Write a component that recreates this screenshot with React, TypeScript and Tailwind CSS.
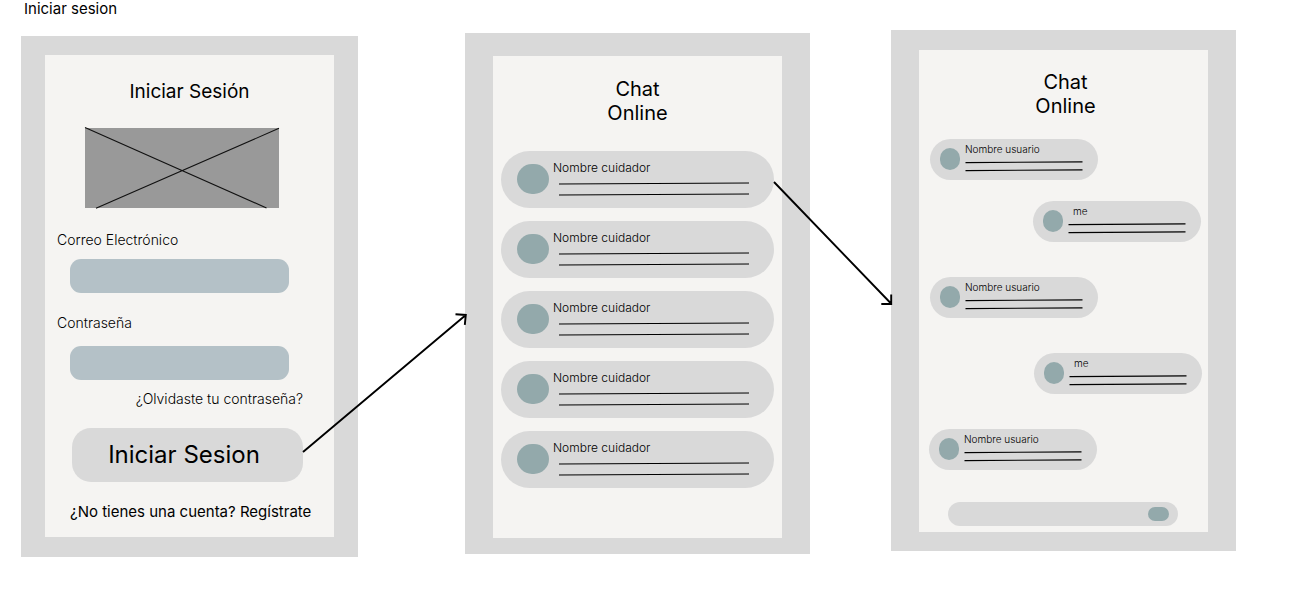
import type { ReactNode } from "react";

const caregivers = [1, 2, 3, 4, 5];

const messages = [
  { id: 1, mine: false, place: "ml-[11px]" },
  { id: 2, mine: true, place: "ml-auto mr-[7px] mt-[21px]" },
  { id: 3, mine: false, place: "ml-[11px] mt-[35px]" },
  { id: 4, mine: true, place: "ml-auto mr-1.5 mt-[35px]" },
  { id: 5, mine: false, place: "ml-2.5 mt-[35px]" },
];

function Frame({ className, children }: { className: string; children: ReactNode }) {
  return (
    <section className={`shrink-0 bg-[#d9d9d9] ${className}`}>
      <div className="min-h-[482px] w-[289px] bg-[#f5f4f2]">{children}</div>
    </section>
  );
}

function Login() {
  return (
    <Frame className="mt-1.5 px-6 pt-[19px] pb-5">
      <form className="flex flex-col pt-[25px] pb-[15px]" onSubmit={(e) => e.preventDefault()}>
        <h2 className="text-center text-[19px] leading-6">Iniciar Sesión</h2>
        <svg
          className="mt-6 ml-10 h-20 w-[194px] overflow-visible bg-[#999]"
          viewBox="0 0 194 80"
          stroke="#111"
          strokeWidth="1.1"
          aria-hidden="true"
        >
          <path d="M0 -.5 181.5 80M194 .3 11 80.3" />
        </svg>
        <label htmlFor="email" className="mt-[22px] ml-3 text-[14px] leading-5 font-light">
          Correo Electrónico
        </label>
        <input
          id="email"
          type="email"
          className="mt-[9px] ml-[25px] h-[34px] w-[219px] rounded-[11px] bg-[#b4c1c7] px-3 text-[14px] outline-none"
        />
        <label htmlFor="password" className="mt-5 ml-3 text-[14px] leading-5 font-light">
          Contraseña
        </label>
        <input
          id="password"
          type="password"
          className="mt-[13px] ml-[25px] h-[34px] w-[219px] rounded-[11px] bg-[#b4c1c7] px-3 text-[14px] outline-none"
        />
        <a href="#recuperar" className="mt-[9px] mr-[31px] self-end text-[14px] leading-5 font-light">
          ¿Olvidaste tu contraseña?
        </a>
        <div className="relative mt-[19px] mr-[31px] ml-[27px]">
          <button
            type="submit"
            className="h-[54px] w-full rounded-[19px] bg-[#d9d9d9] pr-[7px] text-[24px] leading-8"
          >
            Iniciar Sesion
          </button>
          <svg
            className="pointer-events-none absolute bottom-full left-full z-10 h-[118px] w-[164px] overflow-visible"
            viewBox="0 0 164 118"
            fill="none"
            stroke="#000"
            strokeWidth="1.9"
            aria-hidden="true"
          >
            <path d="M0 142 162.5 5.3M152.5 4.3 162.8 5 161.8 14.8" />
          </svg>
        </div>
        <a href="#registro" className="mt-5 ml-[25px] text-[15px] leading-5 whitespace-nowrap">
          ¿No tienes una cuenta? Regístrate
        </a>
      </form>
    </Frame>
  );
}

function CaregiverList() {
  return (
    <Frame className="mt-[3px] ml-[107px] px-7 pt-[23px] pb-4">
      <div className="px-2 pt-[21px]">
        <h2 className="text-center text-[20px] leading-6">
          Chat
          <br />
          Online
        </h2>
        <ul className="mt-[26px] flex flex-col gap-[13px]">
          {caregivers.map((id) => (
            <li key={id} className="relative">
              <a href="#chat" className="flex h-[57px] rounded-[29px] bg-[#d9d9d9] pl-4">
                <span className="mt-[13px] h-[30px] w-8 rounded-[15px] bg-[#93a9ab]" />
                <span className="ml-1 flex flex-col pt-[9px]">
                  <span className="text-[12px] leading-4 font-light">Nombre cuidador</span>
                  <svg
                    className="ml-1.5 h-6 w-[190px]"
                    viewBox="0 0 190 24"
                    stroke="#000"
                    strokeWidth="1.2"
                    aria-hidden="true"
                  >
                    <path d="M0 8 190 7M0 19 190 18" />
                  </svg>
                </span>
              </a>
              {id === 1 && (
                <svg
                  className="pointer-events-none absolute top-[31px] left-full z-10 h-[123px] w-[118px] overflow-visible"
                  viewBox="0 0 118 123"
                  fill="none"
                  stroke="#000"
                  strokeWidth="1.9"
                  aria-hidden="true"
                >
                  <path d="M0 0 117 121.5M107.3 122H117.2V112.5" />
                </svg>
              )}
            </li>
          ))}
        </ul>
      </div>
    </Frame>
  );
}

function Chat() {
  return (
    <Frame className="ml-[81px] px-7 pt-5 pb-[19px]">
      <div className="flex flex-col pt-5">
        <h2 className="pl-1 text-center text-[20px] leading-6">
          Chat
          <br />
          Online
        </h2>
        <ul className="mt-[21px] flex flex-col">
          {messages.map(({ id, mine, place }) => (
            <li
              key={id}
              className={`flex h-[41px] w-[168px] rounded-[21px] bg-[#d9d9d9] pl-2.5 ${place}`}
            >
              <span className="mt-[9px] h-[22px] w-5 rounded-[10px] bg-[#93a9ab]" />
              <div className="ml-[5px] flex flex-col pt-1">
                <span className={`text-[10px] leading-3 font-light ${mine ? "pl-[5px]" : ""}`}>
                  {mine ? "me" : "Nombre usuario"}
                </span>
                <svg
                  className="h-5 w-[118px]"
                  viewBox="0 0 118 20"
                  stroke="#000"
                  strokeWidth="1.1"
                  aria-hidden="true"
                >
                  <path d="M.5 7.6 117.5 6.9M.5 15.6 117.5 14.9" />
                </svg>
              </div>
            </li>
          ))}
        </ul>
        <form
          className="mt-8 mr-[30px] ml-[29px] flex h-6 items-center rounded-full bg-[#d9d9d9] pr-[9px] pl-3"
          onSubmit={(e) => e.preventDefault()}
        >
          <input
            type="text"
            aria-label="Mensaje"
            className="min-w-0 flex-1 bg-transparent text-[10px] outline-none"
          />
          <button
            type="submit"
            aria-label="Enviar"
            className="h-3.5 w-[21px] rounded-full bg-[#93a9ab]"
          />
        </form>
      </div>
    </Frame>
  );
}

export default function App() {
  return (
    <div className="min-h-screen overflow-x-auto bg-white font-['Inter','Liberation_Sans',sans-serif] text-black">
      <h1 className="pl-6 text-[15px] leading-[18px]">Iniciar sesion</h1>
      <main className="mt-3 flex items-start pb-8 pl-[21px]">
        <Login />
        <CaregiverList />
        <Chat />
      </main>
    </div>
  );
}
